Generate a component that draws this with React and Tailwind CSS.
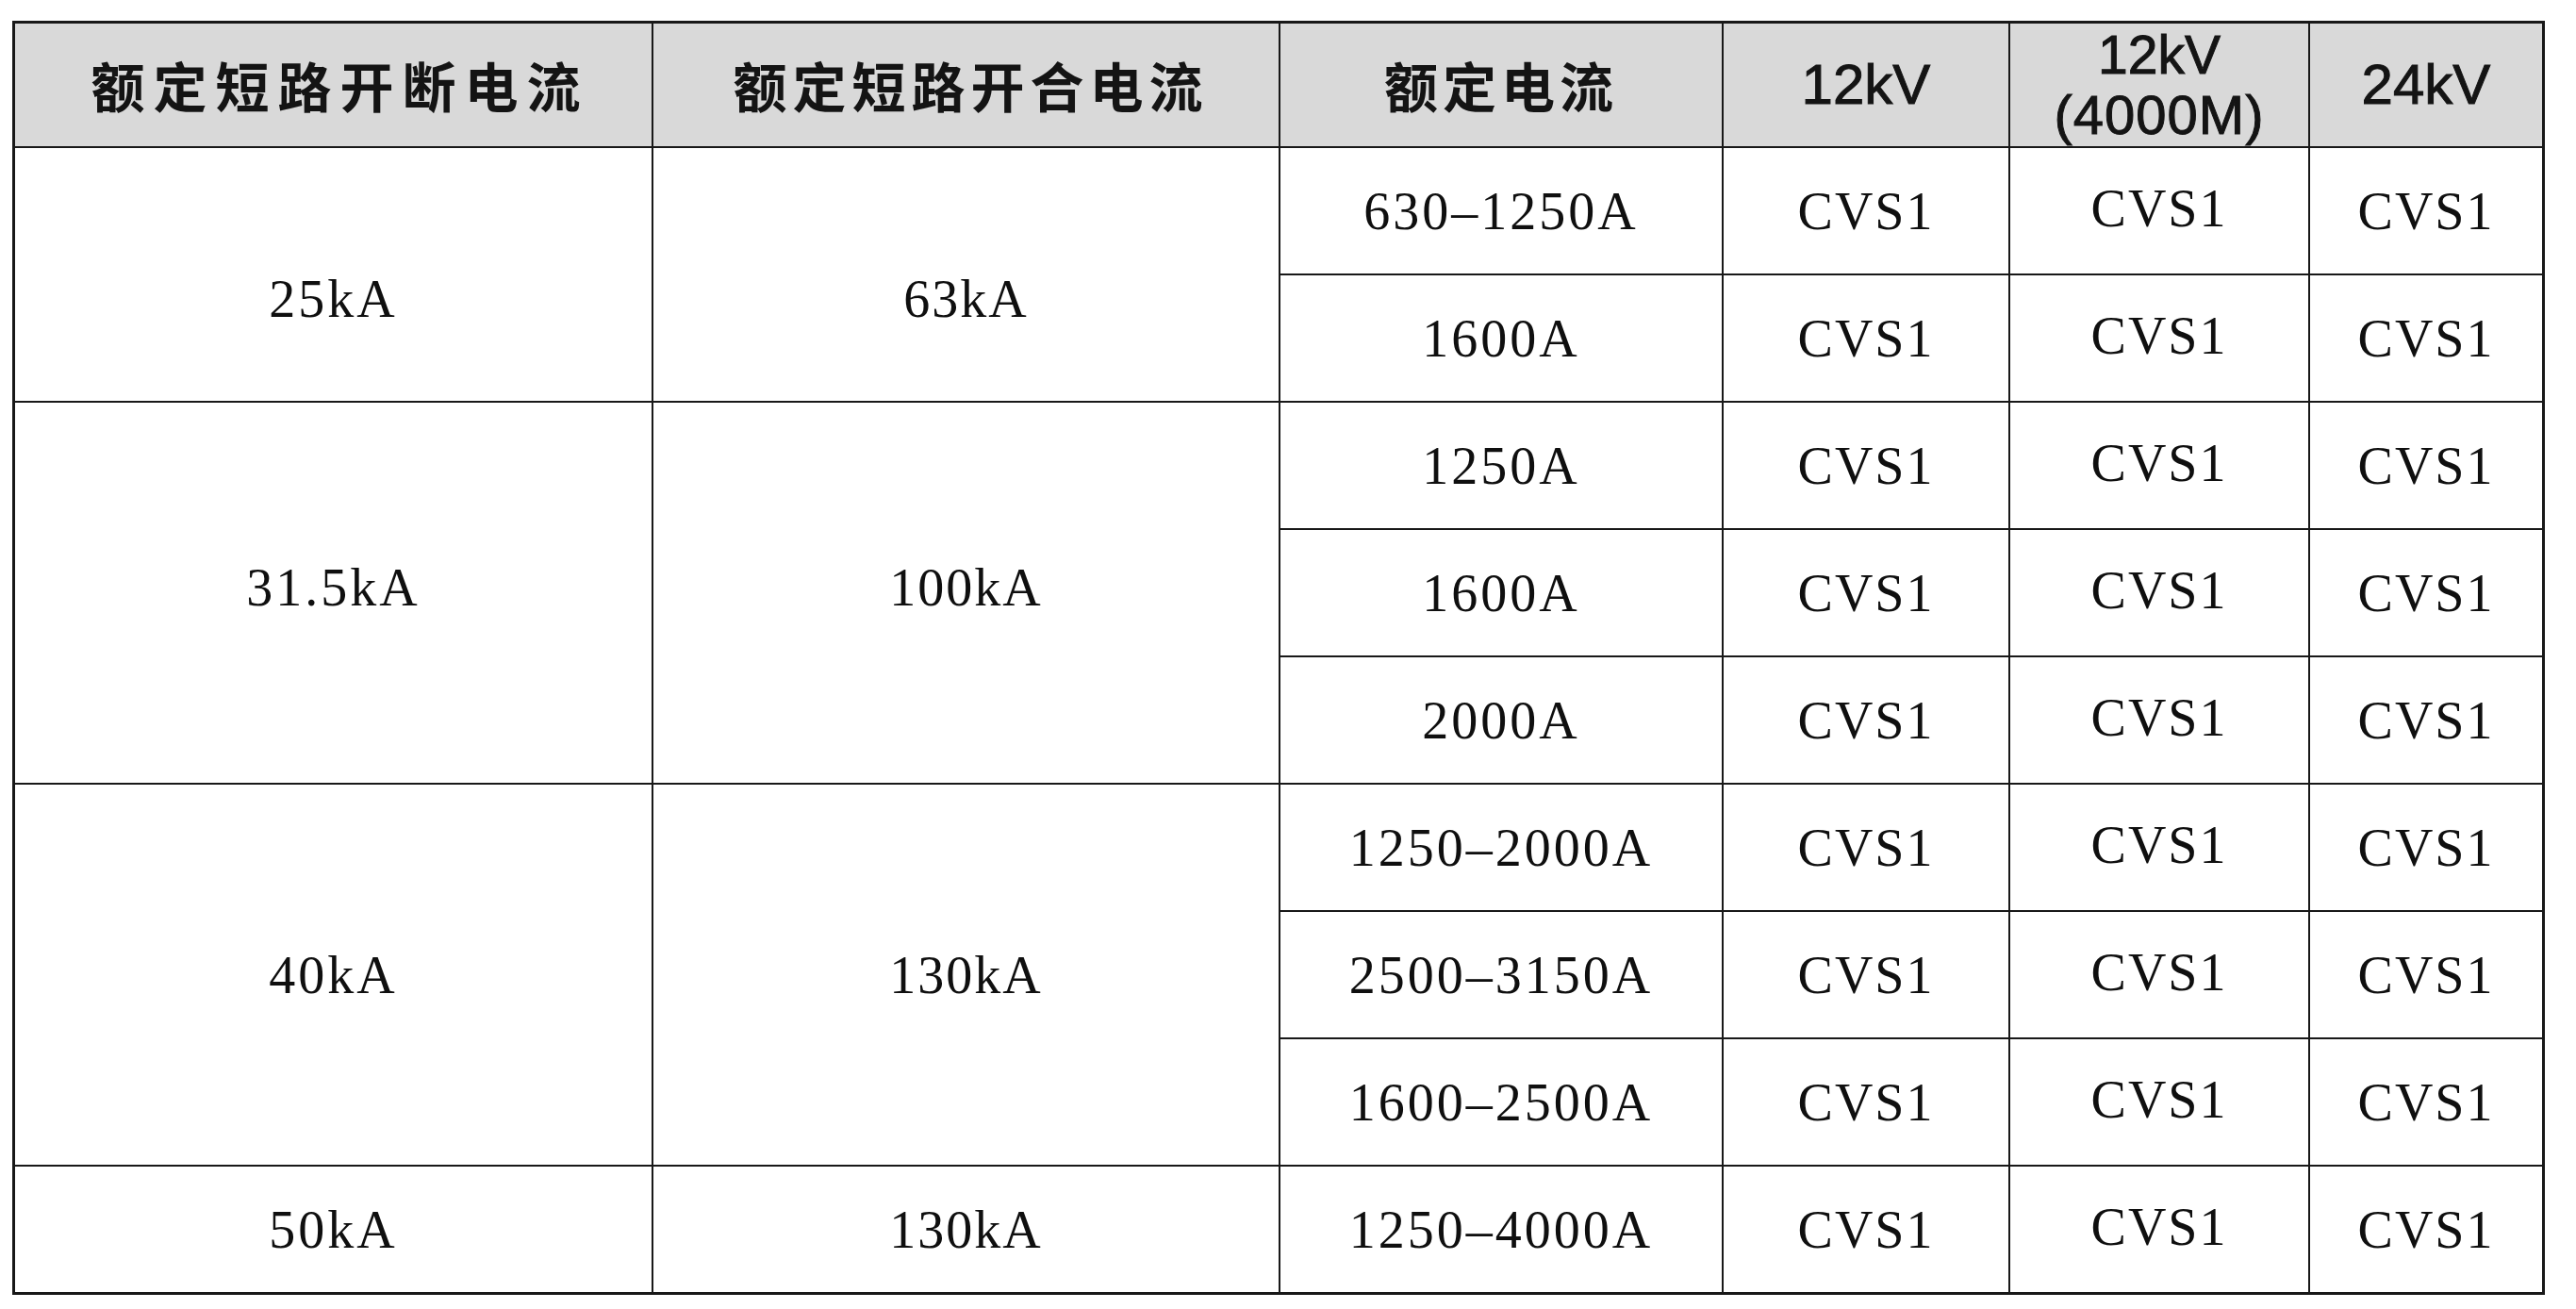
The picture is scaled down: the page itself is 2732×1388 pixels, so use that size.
import React from "react";

const serif = { fontFamily: '"Liberation Serif", "Times New Roman", serif' };

const groups = [
  { breaking: "25kA", making: "63kA", pad: "pt-[52px]", rows: ["630–1250A", "1600A"] },
  { breaking: "31.5kA", making: "100kA", pad: "pb-[12px]", rows: ["1250A", "1600A", "2000A"] },
  { breaking: "40kA", making: "130kA", pad: "", rows: ["1250–2000A", "2500–3150A", "1600–2500A"] },
  { breaking: "50kA", making: "130kA", pad: "", rows: ["1250–4000A"] },
];

const spans = { 1: "row-span-1", 2: "row-span-2", 3: "row-span-3" };

function Cell({ children, className = "" }) {
  return (
    <div className={`flex items-center justify-center bg-white text-[56px] text-[#0f0f0f] ${className}`} style={serif}>
      {children}
    </div>
  );
}

function HeadCell({ children, className = "" }) {
  return (
    <div className={`flex flex-col items-center justify-center bg-[#d9d9d9] text-[#141414] ${className}`}>
      {children}
    </div>
  );
}

export default function App() {
  const cjk = { fontFamily: '"Noto Sans CJK SC", "Noto Sans", sans-serif' };
  const sans = { fontFamily: '"Liberation Sans", Arial, sans-serif' };

  return (
    <div className="min-h-screen bg-white pl-[13px] pt-[22px]">
      <div className="grid w-[2686px] grid-cols-[675px_663px_468px_302px_316px_246px] grid-rows-[130px_repeat(9,133px)] gap-[2px] bg-[#181818] p-[3px]">
        <HeadCell>
          <span className="pl-[14px] text-[57px] font-bold tracking-[9px]" style={cjk}>额定短路开断电流</span>
        </HeadCell>
        <HeadCell>
          <span className="pl-[10px] text-[57px] font-bold tracking-[6px]" style={cjk}>额定短路开合电流</span>
        </HeadCell>
        <HeadCell>
          <span className="text-[57px] font-bold tracking-[5px]" style={cjk}>额定电流</span>
        </HeadCell>
        <HeadCell>
          <span className="text-[60px] font-medium [-webkit-text-stroke:1px_#141414]" style={sans}>12kV</span>
        </HeadCell>
        <HeadCell>
          <span className="text-[57px] leading-[64px] [-webkit-text-stroke:1px_#141414]" style={sans}>12kV</span>
          <span className="text-[58px] leading-[64px] tracking-[1px] [-webkit-text-stroke:1px_#141414]" style={sans}>(4000M)</span>
        </HeadCell>
        <HeadCell>
          <span className="text-[60px] font-medium [-webkit-text-stroke:1px_#141414]" style={sans}>24kV</span>
        </HeadCell>

        {groups.map((g) =>
          g.rows.map((current, i) => (
            <React.Fragment key={g.breaking + current}>
              {i === 0 && (
                <>
                  <Cell className={`${spans[g.rows.length]} ${g.pad} tracking-[3px]`}>{g.breaking}</Cell>
                  <Cell className={`${spans[g.rows.length]} ${g.pad} tracking-[2px]`}>{g.making}</Cell>
                </>
              )}
              <Cell className="tracking-[3px]">{current}</Cell>
              <Cell className="tracking-[2px]">CVS1</Cell>
              <Cell className="pb-[6px] tracking-[2px]">CVS1</Cell>
              <Cell className="tracking-[2px]">CVS1</Cell>
            </React.Fragment>
          ))
        )}
      </div>
    </div>
  );
}
